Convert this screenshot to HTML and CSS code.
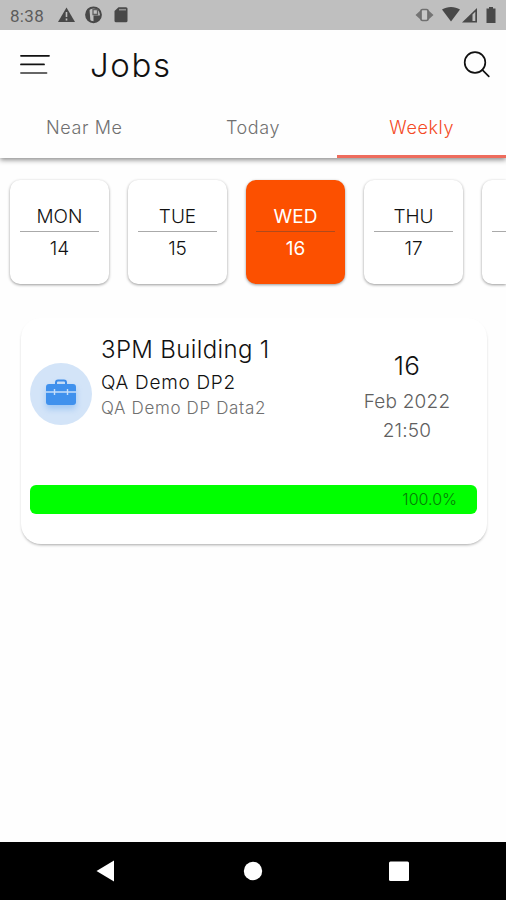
FILE: index.html
```html
<!DOCTYPE html>
<html lang="en">
<head>
    <meta charset="UTF-8">
    <title>Jobs</title>
    <link rel="stylesheet" href="styles.css">
</head>
<body>
    <div class="status-bar">
        <span class="clock">8:38</span>
        <svg class="status-left" width="72" height="18" viewBox="0 0 72 18">
            <path d="M8.500 1.500L17 16H0z" fill="#484848"/>
            <path d="M8.500 6v5M8.500 12.500v2" stroke="#bfbfbf" stroke-width="1.600"/>
            <circle cx="35.500" cy="8.800" r="7.400" fill="none" stroke="#484848" stroke-width="2"/>
            <path d="M31.500 3.500h-2.500v10l3.500 2.500z" fill="#484848"/>
            <path d="M35 3.500h4.500v5H35z" fill="none" stroke="#606060" stroke-width="1.300"/>
            <path d="M35.500 9.500h7.300a7.500 7.500 0 0 1-7.300 6.800z" fill="#484848"/>
            <path d="M60.500 1.200H68a1.500 1.500 0 0 1 1.500 1.500v12a1.500 1.500 0 0 1-1.500 1.500H58a1.500 1.500 0 0 1-1.500-1.500V5z" fill="#484848"/>
            <path d="M61 3.700h7" stroke="#909090" stroke-width="1.600"/>
        </svg>
        <svg class="status-right" width="84" height="18" viewBox="0 0 84 18">
            <path d="M7 4L1.500 9l5.500 5zM14 4l5.500 5-5.500 5z" fill="#747474"/>
            <rect x="7" y="3.500" width="7" height="11" rx="1.500" fill="#c8c8c8" stroke="#707070" stroke-width="1.700"/>
            <path d="M28 3.500C33 0 41 0 46 3.500L37 15.500z" fill="#484848"/>
            <path d="M48 16.500L63 2v14.500z" fill="#484848"/>
            <path d="M58.500 8.500l2.800-2.700v9.200h-2.800z" fill="#bfbfbf"/>
            <path d="M75 1h4v1.500h2.500V17h-9V2.500H75z" fill="#484848"/>
        </svg>
    </div>

    <div class="header">
        <svg class="menu-icon" width="30" height="22" viewBox="0 0 30 22" fill="none" stroke-linecap="round" stroke-width="1.800">
            <path d="M1 1.800h28M1 10.400h23" stroke="#111"/>
            <path d="M1 19h25.500" stroke="#666"/>
        </svg>
        <h1>Jobs</h1>
        <svg class="search-icon" width="28" height="28" viewBox="0 0 28 28" fill="none" stroke="#111" stroke-width="1.700">
            <circle cx="12" cy="11.500" r="10.300"/>
            <path d="M19.300 18.800l6.500 6.500" stroke-linecap="round"/>
        </svg>
    </div>

    <div class="tabs">
        <div class="tab">Near Me</div>
        <div class="tab">Today</div>
        <div class="tab active">Weekly</div>
    </div>

    <div class="days">
        <div class="day"><span>MON</span><hr><span>14</span></div>
        <div class="day"><span>TUE</span><hr><span>15</span></div>
        <div class="day selected"><span>WED</span><hr><span>16</span></div>
        <div class="day"><span>THU</span><hr><span>17</span></div>
        <div class="day cut"><span></span><hr></div>
    </div>

    <div class="job-card">
        <div class="job-row">
            <div class="job-icon">
                <svg width="36" height="34" viewBox="0 0 36 34">
                    <path d="M13 8V5.500a2 2 0 0 1 2-2h6a2 2 0 0 1 2 2V8" fill="none" stroke="#3d8ce8" stroke-width="2"/>
                    <rect x="3" y="7" width="30" height="21" rx="3" fill="#4091ed"/>
                    <path d="M3 15h30M11.500 12v6M24.500 12v6" stroke="#c5defa" stroke-width="1.400"/>
                </svg>
            </div>
            <div class="job-info">
                <div class="job-title">3PM Building 1</div>
                <div class="job-client">QA Demo DP2</div>
                <div class="job-site">QA Demo DP Data2</div>
            </div>
            <div class="job-date">
                <div class="date-day">16</div>
                <div class="date-month">Feb 2022</div>
                <div class="date-time">21:50</div>
            </div>
        </div>
        <div class="progress"><span>100.0%</span></div>
    </div>

    <div class="nav-bar">
        <svg width="20" height="24" viewBox="0 0 20 24"><path d="M0.500 12L18 1.500v21z" fill="#fff"/></svg>
        <svg width="20" height="24" viewBox="0 0 20 24"><circle cx="10" cy="12" r="9.200" fill="#fff"/></svg>
        <svg width="20" height="24" viewBox="0 0 20 24"><rect y="2.500" width="20" height="19.500" rx="1.500" fill="#fff"/></svg>
    </div>
</body>
</html>
```

FILE: styles.css
```css
:root {
    --orange: #fc5000;
    --grey-text: #707070;
}

* {
    box-sizing: border-box;
}

body {
    margin: 0;
    height: 900px;
    display: flex;
    flex-direction: column;
    overflow: hidden;
    background: #fefefe;
    color: #111;
    font-family: Inter, 'Liberation Sans', sans-serif;
    font-weight: 300;
    white-space: nowrap;
}

svg {
    display: block;
    flex: none;
}

.status-bar {
    height: 30px;
    flex: none;
    display: flex;
    align-items: center;
    padding: 0 9px 0 10px;
    background: #bfbfbf;
}

.clock {
    width: 48px;
    padding-top: 2px;
    color: #5c5c5c;
    font-family: Roboto, sans-serif;
    font-size: 17px;
    font-weight: 400;
    letter-spacing: 0.3px;
}

.status-right {
    margin-left: auto;
    margin-right: -1px;
}

.header {
    height: 66px;
    flex: none;
    display: flex;
    align-items: center;
    padding: 4px 15px 0 20px;
}

h1 {
    margin: -1px 0 0 40px;
    font-size: 33px;
    font-weight: 300;
    letter-spacing: 1.6px;
}

.search-icon {
    margin-left: auto;
}

.tabs {
    height: 62px;
    flex: none;
    display: flex;
    box-shadow: 0 2px 5px rgba(0,0,0,0.45);
    clip-path: inset(0 0 -10px 0);
}

.tab {
    flex: 1;
    display: flex;
    align-items: center;
    justify-content: center;
    padding-top: 3px;
    color: var(--grey-text);
    font-size: 18px;
    letter-spacing: 0.6px;
    border-bottom: 3px solid transparent;
}

.tab.active {
    color: #f44a25;
    border-bottom-color: #ee6c5d;
}

.days {
    height: 132px;
    flex: none;
    display: flex;
    gap: 19px;
    padding: 22px 0 0 10px;
}

.day {
    width: 99px;
    height: 104px;
    flex: none;
    display: flex;
    flex-direction: column;
    align-items: center;
    padding: 25px 10px 0;
    background: #fff;
    border-radius: 10px;
    box-shadow: 0 1px 3px rgba(0,0,0,0.4);
    font-size: 19px;
    line-height: 24px;
}

.day span {
    height: 24px;
}

.day hr {
    width: 100%;
    height: 1px;
    margin: 2px 0 5px;
    border: 0;
    background: #aaa;
}

.day.selected {
    background: var(--orange);
    color: #fff;
    font-weight: 400;
}

.day.selected hr {
    background: #b04a1c;
}

/* last day continues past the screen edge */
.day.cut {
    width: 24px;
    padding-right: 0;
    border-radius: 10px 0 0 10px;
}

.job-card {
    height: 226px;
    flex: none;
    margin: 28px 19px 0 21px;
    padding: 16px 10px 0 9px;
    background: #fff;
    border-radius: 20px;
    box-shadow: 0 2px 3px -1px rgba(0,0,0,0.35);
}

.job-row {
    height: 151px;
    display: flex;
    align-items: flex-start;
}

.job-icon {
    width: 62px;
    height: 62px;
    margin-top: 29px;
    display: flex;
    align-items: center;
    justify-content: center;
    border-radius: 50%;
    background: #d3e4f8;
}

.job-icon svg {
    filter: drop-shadow(0 4px 3px rgba(64,145,237,0.35));
}

.job-info {
    margin-left: 9px;
}

.job-title {
    font-size: 24px;
    line-height: 32px;
    letter-spacing: 0.35px;
}

.job-client {
    margin-top: 4px;
    font-size: 19px;
    line-height: 26px;
    letter-spacing: 0.7px;
}

.job-site {
    color: var(--grey-text);
    font-size: 17px;
    line-height: 24px;
    letter-spacing: 0.65px;
}

.job-date {
    width: 140px;
    margin: 15px 0 0 auto;
    text-align: center;
    color: #606060;
    font-size: 19px;
    line-height: 29px;
    letter-spacing: 0.2px;
}

.date-day {
    color: #111;
    font-size: 26px;
    line-height: 34px;
    margin-bottom: 4px;
}

.progress {
    height: 29px;
    display: flex;
    align-items: center;
    justify-content: flex-end;
    padding: 0 20px 2px 0;
    border-radius: 6px;
    background: #00ff00;
    color: #067c06;
    font-size: 16px;
}

.nav-bar {
    height: 58px;
    flex: none;
    margin-top: auto;
    display: flex;
    align-items: center;
    justify-content: space-between;
    padding: 0 97px 0 96px;
    background: #000;
}
```
